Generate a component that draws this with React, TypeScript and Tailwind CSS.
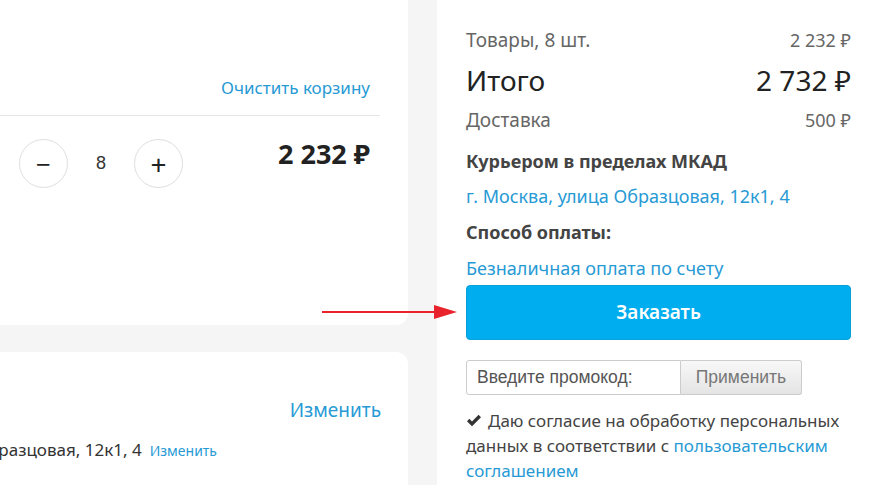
import React from "react";

const F = { fontFamily: '"Noto Sans", "Open Sans", sans-serif' };
const A = { fontFamily: '"Liberation Sans", Arial, sans-serif' };

export default function App() {
  return (
    <div className="relative w-[870px] h-[485px] overflow-hidden bg-[#f5f5f5] flex" style={F}>
      {/* left column */}
      <div className="w-[408px] shrink-0 flex flex-col gap-[27px]">
        <div className="h-[325px] bg-white rounded-br-[12px] flex flex-col">
          <div className="pt-[76px] pr-[38px] flex justify-end">
            <span className="text-[17px] leading-[24px] text-[#279ad5]">Очистить корзину</span>
          </div>
          <div className="mt-[15px] mr-[28px] h-px bg-[#e6e6e6]" />
          <div className="mt-[23px] pl-[19px] pr-[38px] flex items-start">
            <div className="w-[49px] h-[49px] rounded-full border border-[#dedede] flex items-center justify-center text-[26px] text-[#222] leading-none">−</div>
            <div className="w-[66px] text-center text-[18px] leading-[49px] text-[#333]" style={A}>8</div>
            <div className="w-[49px] h-[49px] rounded-full border border-[#dedede] flex items-center justify-center text-[28px] text-[#222] leading-none">+</div>
            <div className="flex-1 text-right font-bold text-[27px] leading-[36px] text-[#222] -mt-[3px]">2 232 ₽</div>
          </div>
        </div>
        <div className="flex-1 bg-white rounded-tr-[12px] overflow-hidden flex flex-col">
          <div className="pt-[44px] pr-[27px] flex justify-end">
            <span className="text-[19px] leading-[28px] text-[#279ad5]">Изменить</span>
          </div>
          <div className="mt-[14px] pr-[191px] flex justify-end items-baseline whitespace-nowrap">
            <span className="text-[17px] leading-[24px] text-[#333]">г. Москва, улица Образцовая, 12к1, 4</span>
            <span className="ml-[8px] text-[14px] leading-[24px] text-[#279ad5]">Изменить</span>
          </div>
        </div>
      </div>

      {/* gap */}
      <div className="w-[29px] shrink-0" />

      {/* right card */}
      <div className="flex-1 bg-white pl-[29px] pr-[19px] pt-[28px] flex flex-col">
        <div className="flex justify-between h-[24px] items-center text-[19px] text-[#666]">
          <span>Товары, 8 шт.</span>
          <span className="text-[18px]">2 232 ₽</span>
        </div>
        <div className="mt-[10px] flex justify-between h-[36px] items-center text-[28px] text-[#222]">
          <span>Итого</span>
          <span>2 732 ₽</span>
        </div>
        <div className="mt-[10px] flex justify-between h-[24px] items-center text-[19px] text-[#666]">
          <span>Доставка</span>
          <span className="text-[18px]">500 ₽</span>
        </div>
        <div className="mt-[17px] h-[24px] leading-[24px] text-[18px] font-bold text-[#444]">Курьером в пределах МКАД</div>
        <div className="mt-[11px] h-[24px] leading-[24px] text-[18px] text-[#279ad5]">г. Москва, улица Образцовая, 12к1, 4</div>
        <div className="mt-[12px] h-[24px] leading-[24px] text-[18px] font-bold text-[#444]">Способ оплаты:</div>
        <div className="mt-[12px] h-[24px] leading-[24px] text-[18px] text-[#279ad5]">Безналичная оплата по счету</div>
        <button className="mt-[5px] h-[55px] w-full rounded-[4px] bg-[#00adee] border border-[#0aa0d8] text-white text-[19px] font-semibold">Заказать</button>
        <div className="mt-[20px] flex h-[35px]" style={A}>
          <div className="w-[215px] h-full border border-[#cccccc] rounded-l-[3px] flex items-center pl-[10px] text-[17.5px] text-[#555]">Введите промокод:</div>
          <div className="w-[121px] h-full border border-l-0 border-[#cccccc] rounded-r-[3px] bg-gradient-to-b from-[#f8f8f8] to-[#e4e4e4] flex items-center justify-center text-[17.5px] text-[#777]">Применить</div>
        </div>
        <div className="mt-[13px] text-[17px] leading-[25px] text-[#444]">
          <svg className="inline-block align-baseline mr-[6px]" width="16" height="13" viewBox="0 0 16 13">
            <path d="M1 7.2 L3.4 4.8 L6 7.4 L12.6 0.8 L15 3.2 L6 12.2 Z" fill="#333" />
          </svg>
          Даю согласие на обработку персональных данных в соответствии с <span className="text-[#279ad5]">пользовательским соглашением</span>
        </div>
      </div>

      {/* arrow */}
      <svg className="absolute left-[320px] top-[302px]" width="140" height="20" viewBox="0 0 140 20">
        <line x1="2" y1="10" x2="118" y2="10" stroke="#e8232b" strokeWidth="2" />
        <polygon points="114,3 137,10 114,17" fill="#e8232b" />
      </svg>
    </div>
  );
}
